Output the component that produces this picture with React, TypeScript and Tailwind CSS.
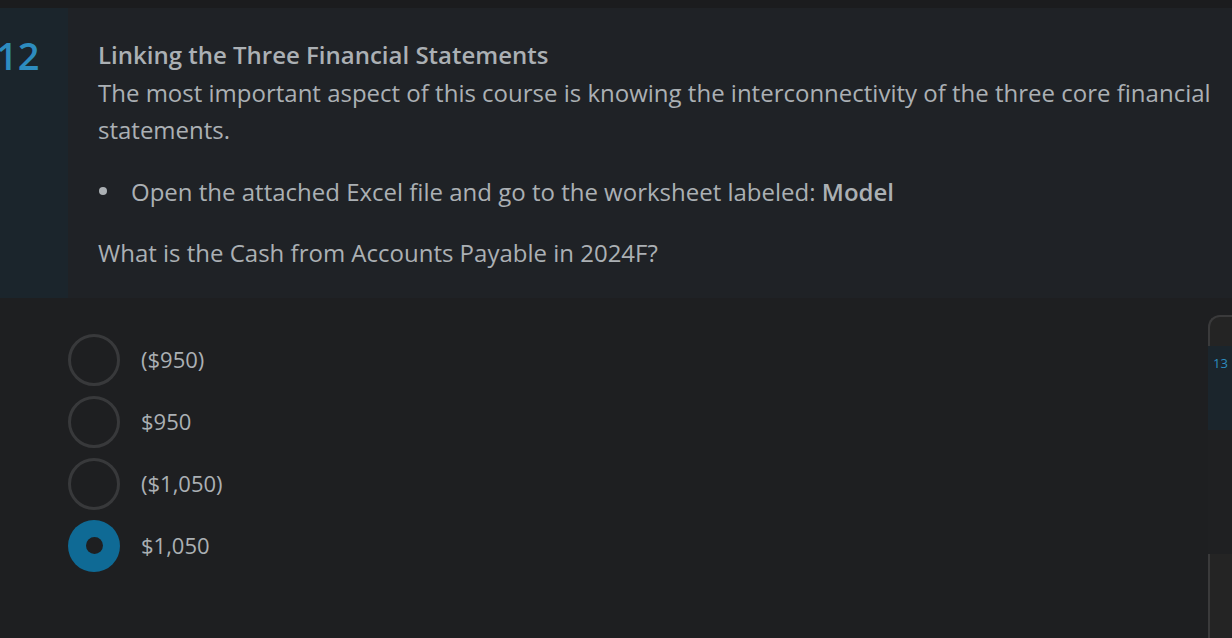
import React from "react";

const options = [
  { label: "($950)", selected: false },
  { label: "$950", selected: false },
  { label: "($1,050)", selected: false },
  { label: "$1,050", selected: true },
];

export default function App() {
  return (
    <div
      className="w-[1232px] h-[638px] overflow-hidden bg-[#1e1f21] flex flex-col"
      style={{ fontFamily: '"Open Sans", "Noto Sans", sans-serif' }}
    >
      <div className="h-[8px] shrink-0 bg-[#1b1c1e]" />
      <div className="flex shrink-0">
        <div className="w-[68px] shrink-0 bg-[#1b252c] pt-[28px] overflow-hidden">
          <div className="-ml-[4px] text-[38px] leading-[38px] font-semibold text-[#2d8cbf]">12</div>
        </div>
        <div className="flex-1 bg-[#1f2226] pl-[30px] pt-[28px] pb-[26px] text-[24px] leading-[37.5px] text-[#abb0b4]">
          <div className="font-semibold">Linking the Three Financial Statements</div>
          <div>
            The most important aspect of this course is knowing the interconnectivity of the three core financial
            statements.
          </div>
          <div className="mt-[24px] flex items-center">
            <span className="w-[8px] h-[8px] rounded-full bg-[#abb0b4] ml-[1px] mr-[24px]" />
            <span>
              Open the attached Excel file and go to the worksheet labeled: <span className="font-semibold">Model</span>
            </span>
          </div>
          <div className="mt-[24px]">What is the Cash from Accounts Payable in 2024F?</div>
        </div>
      </div>
      <div className="flex flex-1">
        <div className="flex-1 pl-[68px] pt-[36px] flex flex-col gap-[10px]">
          {options.map((o) => (
            <div key={o.label} className="flex items-center gap-[21px] h-[52px]">
              {o.selected ? (
                <div className="w-[52px] h-[52px] rounded-full bg-[#0f6a95] flex items-center justify-center">
                  <div className="w-[17px] h-[17px] rounded-full bg-[#1e1f21]" />
                </div>
              ) : (
                <div className="w-[52px] h-[52px] rounded-full border-[3px] border-[#38393b]" />
              )}
              <span className="text-[22px] text-[#abb0b4]">{o.label}</span>
            </div>
          ))}
        </div>
        <div className="w-[24px] mt-[17px] shrink-0 border-l-2 border-t-2 border-[#3a3a3b] rounded-tl-[12px] bg-[#242424] flex flex-col">
          <div className="h-[29px] shrink-0" />
          <div className="-ml-[2px] flex">
            <div className="w-full bg-[#1b252c] h-[84px] pl-[5px] pt-[9px] text-[13px] leading-[16px] text-[#2d8cbf]">
              13
            </div>
          </div>
          <div className="-ml-[2px] h-[124px] bg-[#1f2022]" />
        </div>
      </div>
    </div>
  );
}
